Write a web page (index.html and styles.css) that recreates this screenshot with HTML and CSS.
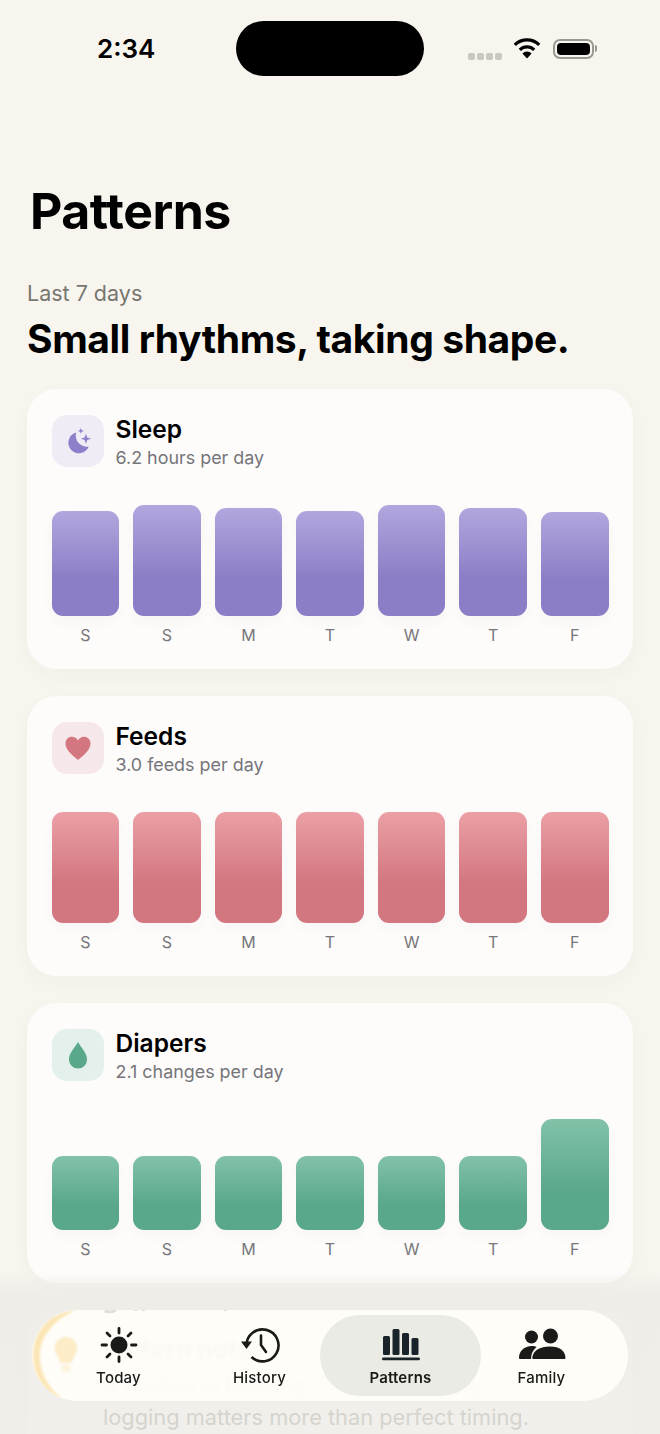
FILE: index.html
```html
<!DOCTYPE html>
<html lang="en">
<head>
    <meta charset="UTF-8">
    <meta name="viewport" content="width=device-width, initial-scale=1.0">
    <title>Patterns</title>
    <link rel="stylesheet" href="styles.css">
</head>
<body>
    <div class="screen">
        <div class="status-bar">
            <span class="clock">2:34</span>
            <div class="island"></div>
            <div class="status-icons">
                <div class="signal"><i></i><i></i><i></i><i></i></div>
                <svg class="wifi" width="30" height="22" viewBox="0 0 30 22">
                    <path d="M15 21.500l-4.600-5a6.400 6.400 0 0 1 9.200 0z" fill="#000"/>
                    <path d="M7.800 12.800a10.400 10.400 0 0 1 14.400 0" fill="none" stroke="#000" stroke-width="3.200"/>
                    <path d="M2.800 7.800a17.400 17.400 0 0 1 24.400 0" fill="none" stroke="#000" stroke-width="3.200"/>
                </svg>
                <div class="battery"><div class="battery-fill"></div></div>
                <div class="battery-cap"></div>
            </div>
        </div>

        <h1 class="page-title">Patterns</h1>

        <p class="range">Last 7 days</p>
        <h2 class="headline">Small rhythms, taking shape.</h2>

        <section class="card">
            <div class="card-head">
                <div class="card-icon icon-sleep">
                    <svg width="34" height="34" viewBox="0 0 30 30" fill="#8d7fc9">
                        <path d="M13.500 7.500a9.300 9.300 0 1 0 11 12.300 9.600 9.600 0 0 1-11-12.300z"/>
                        <path d="M22 8.500l1.100 3.400 3.400 1.100-3.400 1.100-1.100 3.400-1.100-3.400-3.400-1.100 3.400-1.100z"/>
                        <path d="M17.500 3.500l.7 1.900 1.900.7-1.900.7-.7 1.900-.7-1.900-1.900-.7 1.900-.7z"/>
                    </svg>
                </div>
                <div>
                    <div class="card-title">Sleep</div>
                    <div class="card-sub">6.2 hours per day</div>
                </div>
            </div>
            <div class="chart chart-sleep">
                <div class="day"><div class="bar" style="height: 105px"></div><span>S</span></div>
                <div class="day"><div class="bar" style="height: 111px"></div><span>S</span></div>
                <div class="day"><div class="bar" style="height: 108px"></div><span>M</span></div>
                <div class="day"><div class="bar" style="height: 105px"></div><span>T</span></div>
                <div class="day"><div class="bar" style="height: 111px"></div><span>W</span></div>
                <div class="day"><div class="bar" style="height: 108px"></div><span>T</span></div>
                <div class="day"><div class="bar" style="height: 104px"></div><span>F</span></div>
            </div>
        </section>

        <section class="card">
            <div class="card-head">
                <div class="card-icon icon-feeds">
                    <svg width="30" height="30" viewBox="0 0 30 30" fill="#d4767f">
                        <path d="M15 27C9 22 2.500 17 2.500 10.500 2.500 6.500 5.500 3.800 9 3.800c2.500 0 4.700 1.300 6 3.700 1.300-2.400 3.500-3.700 6-3.700 3.500 0 6.500 2.700 6.500 6.700C27.500 17 21 22 15 27z"/>
                    </svg>
                </div>
                <div>
                    <div class="card-title">Feeds</div>
                    <div class="card-sub">3.0 feeds per day</div>
                </div>
            </div>
            <div class="chart chart-feeds">
                <div class="day"><div class="bar" style="height: 111px"></div><span>S</span></div>
                <div class="day"><div class="bar" style="height: 111px"></div><span>S</span></div>
                <div class="day"><div class="bar" style="height: 111px"></div><span>M</span></div>
                <div class="day"><div class="bar" style="height: 111px"></div><span>T</span></div>
                <div class="day"><div class="bar" style="height: 111px"></div><span>W</span></div>
                <div class="day"><div class="bar" style="height: 111px"></div><span>T</span></div>
                <div class="day"><div class="bar" style="height: 111px"></div><span>F</span></div>
            </div>
        </section>

        <section class="card">
            <div class="card-head">
                <div class="card-icon icon-diapers">
                    <svg width="34" height="34" viewBox="0 0 30 30" fill="#5aa88a">
                        <path d="M15 3.500c2 4 8 9.500 8 15.500a8 8 0 0 1-16 0C7 13 13 7.500 15 3.500z"/>
                    </svg>
                </div>
                <div>
                    <div class="card-title">Diapers</div>
                    <div class="card-sub">2.1 changes per day</div>
                </div>
            </div>
            <div class="chart chart-diapers">
                <div class="day"><div class="bar" style="height: 74px"></div><span>S</span></div>
                <div class="day"><div class="bar" style="height: 74px"></div><span>S</span></div>
                <div class="day"><div class="bar" style="height: 74px"></div><span>M</span></div>
                <div class="day"><div class="bar" style="height: 74px"></div><span>T</span></div>
                <div class="day"><div class="bar" style="height: 74px"></div><span>W</span></div>
                <div class="day"><div class="bar" style="height: 74px"></div><span>T</span></div>
                <div class="day"><div class="bar" style="height: 111px"></div><span>F</span></div>
            </div>
        </section>

        <section class="card note-card">
            <div class="note-text">
                <div class="note-title">Pattern note</div>
                <p class="note-body">A routine is building. Consistent daily<br>logging matters more than perfect timing.</p>
            </div>
        </section>

        <div class="veil"></div>

        <nav class="tab-bar">
            <svg class="glass-glow" width="50" height="91" viewBox="0 0 50 91" fill="#fbe2ab">
                <path d="M44 0C16 2 1 22 1 46c0 22 14 38 30 44C15 76 8 62 8 46 8 26 22 10 44 0z"/>
                <path d="M34 27c-7 0-11 5-11 11 0 6 4 9 5.500 15h11C41 47 45 44 45 38c0-6-4-11-11-11z" opacity="0.75"/>
                <path d="M29.500 55h9v7h-9z" opacity="0.45"/>
            </svg>
            <span class="glass-mirror mirror-top">Pattern note</span>
            <div class="tab">
                <svg width="40" height="40" viewBox="0 0 40 40" fill="#1a1a18">
                    <circle cx="20" cy="20" r="8.500"/>
                    <g stroke="#1a1a18" stroke-width="2.800" stroke-linecap="round">
                        <path d="M20 3.500v4.500M20 32v4.500M3 20h4.500M32.500 20H37M8 8l3 3M29 29l3 3M8 32l3-3M29 11l3-3"/>
                    </g>
                </svg>
                <span>Today</span>
            </div>
            <div class="tab">
                <svg width="40" height="40" viewBox="0 0 40 40" fill="none" stroke="#1a1a18" stroke-width="2.600">
                    <path d="M6.500 20.500a16 16 0 1 1 5 11.500"/>
                    <path d="M21 10.500V20l5 7" stroke-linecap="round" stroke-linejoin="round"/>
                    <path d="M1 16.500h11l-5.500 7.500z" fill="#1a1a18" stroke="none"/>
                </svg>
                <span>History</span>
            </div>
            <div class="tab tab-active">
                <svg width="40" height="40" viewBox="0 0 40 40" fill="#18232a">
                    <rect x="2" y="11" width="7" height="19" rx="1.500"/>
                    <rect x="11.500" y="4" width="7" height="26" rx="1.500"/>
                    <rect x="21" y="8" width="7" height="22" rx="1.500"/>
                    <rect x="30.500" y="13" width="7" height="17" rx="1.500"/>
                    <rect x="1" y="32.500" width="38" height="2.800" rx="1.400"/>
                </svg>
                <span>Patterns</span>
            </div>
            <div class="tab">
                <svg width="48" height="40" viewBox="0 0 48 40" fill="#1a1a18">
                    <circle cx="13.500" cy="12" r="6.500"/>
                    <circle cx="32.500" cy="11" r="7.500"/>
                    <path d="M1 33c0-7 5-12 13-12 2 0 3 .3 4.500 1-3.500 3-5.500 7-5.500 12H2.500C1.500 34 1 33.800 1 33z"/>
                    <path d="M15.500 34c-1 0-1.300-.7-1.300-1.300C15 26 22 21.500 32 21.500S47 26 47.500 32.700c0 .6-.4 1.300-1.300 1.300z"/>
                </svg>
                <span>Family</span>
            </div>
        </nav>
    </div>
</body>
</html>
```

FILE: styles.css
```css
* {
    box-sizing: border-box;
}

html, body {
    margin: 0;
    padding: 0;
}

body {
    font-family: Inter, "Liberation Sans", Arial, sans-serif;
    background-color: #f8f5ef;
    color: #000;
}

.screen {
    position: relative;
    width: 660px;
    height: 1434px;
    overflow: hidden;
    padding: 0 27px;
}

.status-bar {
    display: flex;
    align-items: flex-start;
    height: 76px;
    margin: 0 -27px;
    padding: 21px 0 0 97px;
}

.clock {
    width: 139px;
    margin-top: 13px;
    font-size: 26px;
    font-weight: 600;
    line-height: 30px;
}

.island {
    width: 188px;
    height: 55px;
    border-radius: 28px;
    background-color: #000;
}

.status-icons {
    display: flex;
    align-items: center;
    margin-left: 44px;
    height: 54px;
}

.signal {
    display: flex;
    gap: 2px;
    margin-top: 17px;
}

.signal i {
    width: 7px;
    height: 7px;
    border-radius: 2px;
    background-color: #c9c7c2;
}

.wifi {
    margin-left: 10px;
    margin-top: -1px;
}

.battery {
    width: 41px;
    height: 20px;
    margin-left: 11px;
    margin-top: 1px;
    padding: 2px;
    border: 2px solid #9a9892;
    border-radius: 7px;
}

.battery-fill {
    height: 100%;
    border-radius: 4px;
    background-color: #000;
}

.battery-cap {
    width: 2px;
    height: 7px;
    margin-left: 1px;
    margin-top: 1px;
    border-radius: 0 2px 2px 0;
    background-color: #9a9892;
}

.page-title {
    margin: 105px 0 0 3px;
    font-size: 50px;
    font-weight: 700;
    line-height: 60px;
    letter-spacing: -0.5px;
}

.range {
    margin: 38px 0 0;
    font-size: 21.500px;
    line-height: 28px;
    color: #77766f;
}

.headline {
    margin: 9px 0 0;
    font-size: 39px;
    font-weight: 700;
    line-height: 46px;
    letter-spacing: -0.4px;
}

.card {
    height: 280px;
    margin-top: 27px;
    padding: 26px 24.500px 0;
    border-radius: 30px;
    background-color: #fdfcfb;
    box-shadow: 0 6px 20px rgba(60, 50, 30, 0.03);
}

.card-head {
    display: flex;
    gap: 12px;
    height: 52px;
}

.card-icon {
    display: flex;
    align-items: center;
    justify-content: center;
    width: 52px;
    height: 52px;
    border-radius: 15px;
}

.icon-sleep {
    background-color: #efecf5;
}

.icon-feeds {
    background-color: #f6e8ea;
}

.icon-diapers {
    background-color: #e4f0eb;
}

.card-title {
    margin-top: -1px;
    font-size: 24.500px;
    font-weight: 600;
    line-height: 30px;
}

.card-sub {
    font-size: 17.900px;
    line-height: 28px;
    color: #75757a;
}

.chart {
    display: flex;
    gap: 13.700px;
    align-items: flex-end;
    height: 144px;
    margin-top: 33px;
}

.day {
    display: flex;
    flex: 1;
    flex-direction: column;
    align-items: center;
}

.day span {
    height: 28px;
    font-size: 16px;
    line-height: 38px;
    color: #77767a;
}

.bar {
    width: 100%;
    border-radius: 11px;
    box-shadow: 0 6px 14px rgba(60, 50, 30, 0.03);
}

.chart-sleep .bar {
    background: linear-gradient(#b2a6de, #8c7ec6 65%);
}

.chart-feeds .bar {
    background: linear-gradient(#eba0a6, #d27680 65%);
}

.chart-diapers .bar {
    background: linear-gradient(#82c2a8, #5aa88a 65%);
}

.note-card {
    padding: 23px 0 0 76px;
}

.note-title {
    font-size: 25px;
    font-weight: 700;
    line-height: 32px;
}

.note-body {
    margin: 4px 0 0;
    font-size: 21.800px;
    line-height: 32px;
    white-space: nowrap;
    color: #77766f;
}

.veil {
    position: absolute;
    left: 0;
    right: 0;
    top: 1272px;
    bottom: 0;
    background: linear-gradient(rgba(237, 236, 231, 0), rgba(237, 236, 231, 0.9) 22px, rgba(237, 236, 231, 0.78));
}

.tab-bar {
    position: absolute;
    left: 32px;
    top: 1310px;
    display: flex;
    justify-content: center;
    width: 596px;
    height: 91px;
    padding: 5px 0;
    overflow: hidden;
    border-radius: 46px;
    background-color: rgba(255, 254, 250, 0.9);
    backdrop-filter: blur(1.500px);
}

.glass-glow {
    position: absolute;
    left: 0;
    top: 0;
    filter: blur(1px);
    opacity: 0.85;
}

.glass-mirror {
    position: absolute;
    left: 71px;
    font-weight: 600;
    color: #dfdeda;
    transform: scaleY(-1);
}

.mirror-top {
    top: -19px;
    font-size: 24px;
    line-height: 24px;
}

.tab {
    position: relative;
    display: flex;
    flex: 0 0 141px;
    flex-direction: column;
    align-items: center;
    padding-top: 10px;
    border-radius: 40px;
    font-size: 15px;
    font-weight: 500;
    letter-spacing: 0.2px;
    color: #1a1a18;
}

.tab svg {
    display: block;
}

.tab span {
    margin-top: 3px;
    line-height: 20px;
}

.tab-active {
    flex-basis: 161px;
    margin: 0 -10px;
    font-weight: 600;
    background-color: #ebebe5;
}
```
